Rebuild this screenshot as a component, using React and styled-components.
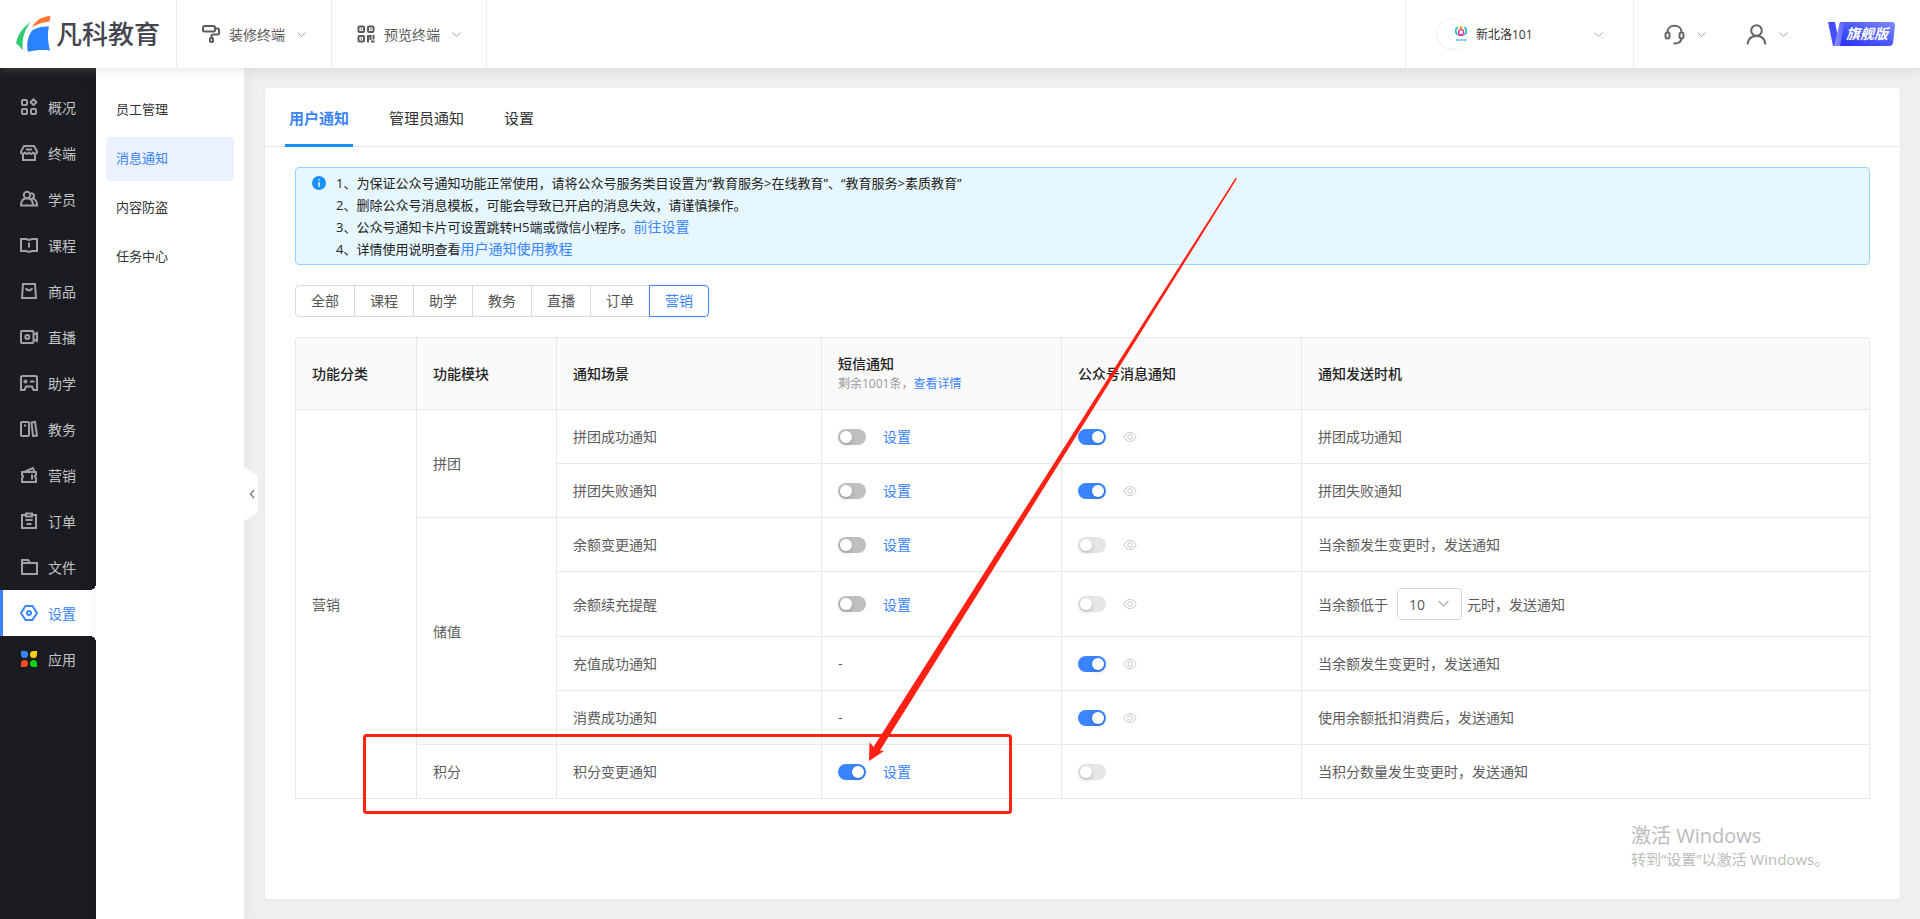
import React, { useState } from 'react';
import styled, { createGlobalStyle, css } from 'styled-components';

const BLUE = '#3a84ff';
const DARK = '#1b1c21';
const LINE = '#e8e8e8';

const GlobalStyle = createGlobalStyle`
  * {
    box-sizing: border-box;
  }

  body {
    margin: 0;
    background: #efeff2;
    color: #333;
    font-family: 'Open Sans', 'Noto Sans CJK SC', sans-serif;
    font-size: 14px;
    line-height: 21px;
  }

  button, input, select {
    font: inherit;
    color: inherit;
    margin: 0;
  }

  a {
    color: ${BLUE};
    text-decoration: none;
  }
`;

const Page = styled.div`
  position: relative;
  display: flex;
  flex-direction: column;
  min-height: 100vh;
`;

/* ---------- header ---------- */

const Header = styled.header`
  position: relative;
  z-index: 2;
  display: flex;
  height: 68px;
  background: #fff;
  box-shadow: 0 2px 10px rgba(160, 160, 160, 0.25);
`;

const Logo = styled.a`
  display: flex;
  align-items: center;
  gap: 5px;
  width: 177px;
  padding-left: 15px;
  border-right: 1px solid #eee;
  color: #45464d;
  font-size: 26px;
  font-weight: 500;
  line-height: 36px;
`;

const HeaderMenu = styled.button`
  display: flex;
  align-items: center;
  gap: 9px;
  width: 155px;
  padding: 0 0 0 25px;
  border: 0;
  border-right: 1px solid #eee;
  background: none;
  color: #5c5c5c;
  cursor: pointer;

  svg:last-child {
    margin-left: 3px;
  }
`;

const Spacer = styled.div`
  flex: 1;
`;

const Account = styled.button`
  display: flex;
  align-items: center;
  gap: 8px;
  width: 229px;
  padding: 0 30px;
  border: 0;
  border-left: 1px solid #eee;
  border-right: 1px solid #eee;
  background: none;
  color: #333;
  font-size: 12px;
  cursor: pointer;

  svg:last-child {
    margin-left: auto;
  }
`;

const Avatar = styled.span`
  display: flex;
  align-items: center;
  justify-content: center;
  width: 32px;
  height: 32px;
  border: 1px solid #eee;
  border-radius: 50%;
`;

const HeaderTools = styled.div`
  display: flex;
  align-items: center;
  gap: 40px;
  padding: 0 25px 0 30px;
`;

const ToolButton = styled.button`
  display: flex;
  align-items: center;
  gap: 12px;
  padding: 0;
  border: 0;
  background: none;
  color: #666;
  cursor: pointer;
`;

const Edition = styled.div`
  position: relative;
  width: 67px;
  height: 24px;
  color: #fff;
  font-size: 14px;
  font-style: italic;
  font-weight: 700;
  line-height: 24px;

  svg {
    display: block;
  }

  span {
    position: absolute;
    top: 0;
    left: 18px;
    white-space: nowrap;
  }
`;

/* ---------- side menus ---------- */

const Body = styled.div`
  display: flex;
  flex: 1;
`;

const SideNav = styled.nav`
  flex: none;
  width: 96px;
  padding-top: 16px;
  background: ${DARK};
`;

const SideItem = styled.a`
  position: relative;
  display: flex;
  align-items: center;
  gap: 10px;
  height: 46px;
  padding-left: 17px;
  border-left: 3px solid transparent;
  color: #c3c3c5;

  svg {
    color: #a2a2a4;
  }

  ${({ $active }) => $active && css`
    border-left-color: ${BLUE};
    background: #fff;
    color: ${BLUE};

    svg {
      color: ${BLUE};
    }

    &::before,
    &::after {
      content: '';
      position: absolute;
      right: 0;
      width: 6px;
      height: 6px;
    }

    &::before {
      top: -6px;
      background: radial-gradient(circle at 0 0, transparent 6px, #fff 6px);
    }

    &::after {
      bottom: -6px;
      background: radial-gradient(circle at 0 100%, transparent 6px, #fff 6px);
    }
  `}
`;

const SubNav = styled.nav`
  position: relative;
  display: flex;
  flex: none;
  flex-direction: column;
  gap: 5px;
  width: 148px;
  padding: 20px 10px;
  background: #fff;
  box-shadow: 2px 0 14px rgba(0, 0, 0, 0.06);
`;

const SubItem = styled.a`
  height: 44px;
  padding-left: 10px;
  border-radius: 4px;
  background: ${({ $active }) => ($active ? '#ebf1ff' : 'transparent')};
  color: ${({ $active }) => ($active ? BLUE : '#333')};
  font-size: 13px;
  line-height: 43px;
`;

const Collapse = styled.button`
  position: absolute;
  top: 399px;
  right: -14px;
  padding: 0;
  border: 0;
  background: none;
  cursor: pointer;

  svg {
    display: block;
  }
`;

/* ---------- content ---------- */

const Main = styled.main`
  display: flex;
  flex: 1;
  min-width: 0;
  padding: 20px 20px 20px 21px;
`;

const Card = styled.section`
  flex: 1;
  min-width: 0;
  border-radius: 4px;
  background: #fff;
  box-shadow: 0 1px 4px rgba(0, 0, 0, 0.04);
`;

const Tabs = styled.div`
  display: flex;
  gap: 32px;
  padding: 0 20px;
  border-bottom: 1px solid ${LINE};
`;

const Tab = styled.button`
  height: 59px;
  margin-bottom: -1px;
  padding: 5px 4px 0;
  border: 0;
  border-bottom: 3px solid ${({ $active }) => ($active ? '#1890ff' : 'transparent')};
  background: none;
  color: ${({ $active }) => ($active ? BLUE : '#333')};
  font-size: 15px;
  font-weight: ${({ $active }) => ($active ? 700 : 400)};
  cursor: pointer;
`;

const Content = styled.div`
  display: flex;
  flex-direction: column;
  align-items: stretch;
  gap: 20px;
  padding: 20px 30px;
`;

const Notice = styled.div`
  display: flex;
  gap: 10px;
  padding: 4px 16px;
  border: 1px solid #91d5ff;
  border-radius: 4px;
  background: #e6f7ff;
  color: #222;
  font-size: 13px;
  line-height: 22px;

  svg {
    flex: none;
    margin-top: 4px;
  }

  p {
    height: 22px;
    margin: 0;
  }

  a {
    font-size: 14px;
  }
`;

const Filters = styled.div`
  display: flex;
`;

const Filter = styled.button`
  width: 60px;
  height: 32px;
  margin-right: -1px;
  padding: 0 0 2px;
  border: 1px solid ${({ $active }) => ($active ? BLUE : '#d9d9d9')};
  background: #fff;
  color: ${({ $active }) => ($active ? BLUE : '#555')};
  cursor: pointer;

  ${({ $active }) => $active && css`
    position: relative;
  `}

  &:first-child {
    border-radius: 4px 0 0 4px;
  }

  &:last-child {
    border-radius: 0 4px 4px 0;
  }
`;

const Table = styled.table`
  width: 100%;
  border: 1px solid ${LINE};
  border-width: 1px 0 0 1px;
  border-radius: 4px 4px 0 0;
  border-spacing: 0;
  table-layout: fixed;
  color: #5c5c5c;

  th,
  td {
    padding: 16px;
    border: 1px solid ${LINE};
    border-width: 0 1px 1px 0;
    text-align: left;
    font-weight: 400;
  }

  th {
    height: 72px;
    background: #fafafa;
    color: #222;
    font-weight: 500;
  }

  thead th {
    padding: 0 16px;
  }

  th:last-child {
    border-top-right-radius: 4px;
  }
`;

const Col = styled.col`
  width: ${({ $width }) => ($width ? `${$width}px` : 'auto')};
`;

const Quota = styled.div`
  color: #999;
  font-size: 12px;
  font-weight: 400;
  line-height: 20px;
`;

const Controls = styled.div`
  display: flex;
  align-items: center;
  gap: 17px;
  height: 21px;
`;

const Switch = styled.input`
  flex: none;
  appearance: none;
  width: 28px;
  height: 16px;
  border-radius: 8px;
  background: #bfbfbf;
  cursor: pointer;

  &::before {
    content: '';
    display: block;
    width: 12px;
    height: 12px;
    margin: 2px;
    border-radius: 50%;
    background: #fff;
    box-shadow: 0 2px 4px rgba(0, 35, 11, 0.2);
  }

  &:checked {
    background: ${BLUE};
  }

  &:checked::before {
    margin-left: 14px;
  }

  &:disabled {
    background: #e5e5e5;
    cursor: not-allowed;
  }
`;

const IconButton = styled.button`
  display: flex;
  padding: 0;
  border: 0;
  background: none;
  color: #c8c8c8;
  cursor: pointer;
`;

const Threshold = styled.label`
  display: flex;
  align-items: center;
`;

const SelectBox = styled.span`
  position: relative;
  margin: 0 5px 0 9px;

  select {
    display: block;
    appearance: none;
    width: 65px;
    height: 32px;
    padding: 0 11px;
    border: 1px solid #d9d9d9;
    border-radius: 4px;
    background: #fff;
  }

  svg {
    position: absolute;
    top: 10px;
    right: 13px;
    pointer-events: none;
  }
`;

/* ---------- overlays ---------- */

const Marks = styled.svg`
  position: absolute;
  top: 0;
  left: 0;
  z-index: 3;
  pointer-events: none;
`;

const Watermark = styled.div`
  position: absolute;
  right: 92px;
  bottom: 49px;
  z-index: 3;
  width: 197px;
  color: #bbb;
  font-size: 15px;
  line-height: 21px;
  white-space: nowrap;
  pointer-events: none;

  strong {
    display: block;
    font-size: 20px;
    font-weight: 400;
    line-height: 26px;
  }
`;

/* ---------- icons ---------- */

const Chevron = ({ size = 9, color = '#aaa' }) => (
  <svg width={size} height={size} viewBox="0 0 9 9" fill="none" stroke={color}>
    <path d="M.5 2.5l4 4 4-4" />
  </svg>
);

const iconPaths = {
  home: (
    <>
      <rect x="2" y="2" width="5" height="5" rx="1" />
      <path d="M13.5 1.3l2.900 2.900-2.900 2.900-2.900-2.900z" strokeLinejoin="round" />
      <rect x="2" y="11" width="5" height="5" rx="1" />
      <rect x="11" y="11" width="5" height="5" rx="1" />
    </>
  ),
  shop: (
    <>
      <path d="M4 2h10l3 5.5c0 3-3.500 3-4 .5-.5 2.500-3.500 2.500-4 0-.5 2.500-3.500 2.500-4 0-.5 2.500-4 2.500-4-.5z" />
      <path d="M3 10v6h12v-6M6 5.500h6" />
    </>
  ),
  users: (
    <>
      <circle cx="7" cy="5" r="3.200" />
      <path d="M1 15.500c0-4.500 2-7.300 6-7.300s6 2.800 6 7.300zM11 3.200c3 0 4.200 3.600 1.600 5.200 3 .8 4.400 3.400 4.400 7.100h-4" />
    </>
  ),
  course: (
    <path d="M1 3h5l3 1 3-1h5v12h-5l-3 1-3-1H1zM9 6.500v5" />
  ),
  goods: (
    <path d="M3 2h12l1 14H2zM6 6c.5 3 5.500 3 6 0" />
  ),
  live: (
    <>
      <rect x="1" y="3" width="12.500" height="12" rx="1" />
      <circle cx="7.300" cy="9" r="2" />
      <path d="M13.500 6.500L17 5v8l-3.500-1.500" />
    </>
  ),
  learn: (
    <>
      <path d="M2.500 2h13A1.500 1.500 0 0 1 17 3.500V16h-3.500l-1.500-3.500H6L4.500 16H1V3.500A1.500 1.500 0 0 1 2.500 2z" />
      <path d="M3.500 7.500h4M5.500 5.500v4M10 7.500h4.500" />
    </>
  ),
  books: (
    <>
      <rect x="1" y="2" width="8" height="14" rx="1" />
      <path d="M11.500 2.500l3.500-.5 2 13.500-4 .5zM4 5.500h2" />
    </>
  ),
  ticket: (
    <path d="M2 6h14v3c-1.500 1-1.500 2 0 3v4H2v-4c1.500-1 1.500-2 0-3zM4 6l9-4 1.500 4M12 8.500v5" />
  ),
  order: (
    <>
      <path d="M5 3H2v13h14V3h-3" />
      <path d="M6 1.500h6v3H6zM5.500 8h7M6.500 12h5" />
    </>
  ),
  folder: (
    <path d="M2 5V2h6l1.500 2.500M2 5h15v11H2z" />
  ),
  settings: (
    <>
      <path d="M5.500 2h7L17 9l-4.500 7h-7L1 9z" strokeLinejoin="round" />
      <circle cx="9" cy="9" r="2" />
    </>
  ),
};

const SideIcon = ({ name }) => {
  if (name === 'apps') {
    return (
      <svg width="18" height="18" viewBox="0 0 18 18">
        <path d="M1 1h4.500A3 3 0 0 1 8 4.500 3.500 3.500 0 0 1 1 4.500z" fill="#3a84ff" />
        <path d="M17 1v3.500a3.500 3.500 0 0 1-7 0A3.500 3.500 0 0 1 13.500 1z" fill="#ffd012" />
        <path d="M1 17v-3.500a3.500 3.500 0 0 1 7 0A3.500 3.500 0 0 1 4.500 17z" fill="#ff4c22" />
        <path d="M17 17v-3.500a3.500 3.500 0 0 0-7 0 3.500 3.500 0 0 0 3.500 3.500z" fill="#10d310" />
      </svg>
    );
  }
  return (
    <svg width="18" height="18" viewBox="0 0 18 18" fill="none" stroke="currentColor" strokeWidth="2">
      {iconPaths[name]}
    </svg>
  );
};

const Eye = () => (
  <svg width="14" height="14" viewBox="0 0 14 14" fill="none" stroke="currentColor">
    <path d="M.8 7C3.500 1 10.500 1 13.200 7 10.500 13 3.500 13 .8 7z" />
    <circle cx="7" cy="7" r="2.300" />
  </svg>
);

/* ---------- data ---------- */

const sideItems = [
  ['home', '概况'],
  ['shop', '终端'],
  ['users', '学员'],
  ['course', '课程'],
  ['goods', '商品'],
  ['live', '直播'],
  ['learn', '助学'],
  ['books', '教务'],
  ['ticket', '营销'],
  ['order', '订单'],
  ['folder', '文件'],
  ['settings', '设置'],
  ['apps', '应用'],
];

const subItems = ['员工管理', '消息通知', '内容防盗', '任务中心'];
const tabs = ['用户通知', '管理员通知', '设置'];
const filters = ['全部', '课程', '助学', '教务', '直播', '订单', '营销'];

const rows = [
  { module: '拼团', span: 2, scene: '拼团成功通知', sms: false, wx: true, eye: true, time: '拼团成功通知' },
  { scene: '拼团失败通知', sms: false, wx: true, eye: true, time: '拼团失败通知' },
  { module: '储值', span: 4, scene: '余额变更通知', sms: false, eye: true, time: '当余额发生变更时，发送通知' },
  { scene: '余额续充提醒', sms: false, eye: true, threshold: true },
  { scene: '充值成功通知', wx: true, eye: true, time: '当余额发生变更时，发送通知' },
  { scene: '消费成功通知', wx: true, eye: true, time: '使用余额抵扣消费后，发送通知' },
  { module: '积分', span: 1, scene: '积分变更通知', sms: true, time: '当积分数量发生变更时，发送通知' },
];

const NoticeRow = ({ row, first }) => (
  <tr>
    {first && <td rowSpan={rows.length}>营销</td>}
    {row.module && <td rowSpan={row.span}>{row.module}</td>}
    <td>{row.scene}</td>
    <td>
      {row.sms === undefined ? '-' : (
        <Controls>
          <Switch type="checkbox" role="switch" defaultChecked={row.sms} aria-label={`${row.scene}短信`} />
          <a href="#sms">设置</a>
        </Controls>
      )}
    </td>
    <td>
      <Controls>
        <Switch type="checkbox" role="switch" defaultChecked={row.wx} disabled={!row.wx} aria-label={`${row.scene}公众号`} />
        {row.eye && <IconButton type="button" aria-label="预览"><Eye /></IconButton>}
      </Controls>
    </td>
    <td>
      {row.threshold ? (
        <Threshold>
          当余额低于
          <SelectBox>
            <select defaultValue="10">
              <option>10</option>
              <option>50</option>
              <option>100</option>
            </select>
            <Chevron size={11} />
          </SelectBox>
          元时，发送通知
        </Threshold>
      ) : row.time}
    </td>
  </tr>
);

export default function App() {
  const [tab, setTab] = useState('用户通知');
  const [filter, setFilter] = useState('营销');

  return (
    <Page>
      <GlobalStyle />
      <Header>
        <Logo href="#home">
          <svg width="36" height="38" viewBox="0 0 36 38">
            <path d="M17 12C21 5 27 1.500 35.500 1L34.500 6.500C28 7 23 9 17 12z" fill="#ff7733" />
            <path d="M16 7C8 12 3 19 1 28L8 35C6.500 25 9 15 16 7z" fill="#2ecc71" />
            <path d="M13 37C11 29 13 21 17 15.500 22 12.500 28 11 34 11.500 32 20 33 27 35 35.500 28 34.500 20 35 13 37z" fill="#2a82ff" />
          </svg>
          凡科教育
        </Logo>
        <HeaderMenu type="button">
          <svg width="18" height="18" viewBox="0 0 18 18" fill="none" stroke="currentColor" strokeWidth="2">
            <rect x="1" y="1" width="12" height="5.500" rx="1.500" />
            <path d="M13 3.500h2.500a1.500 1.500 0 0 1 1.500 1.500v3a1.500 1.500 0 0 1-1.500 1.500H11A1.500 1.500 0 0 0 9.500 11v2" />
            <rect x="8" y="13" width="3" height="4" rx="1" />
          </svg>
          装修终端
          <Chevron />
        </HeaderMenu>
        <HeaderMenu type="button">
          <svg width="18" height="18" viewBox="0 0 18 18" fill="none" stroke="currentColor" strokeWidth="2">
            <rect x="1.500" y="1.500" width="5.500" height="5.500" rx="1" />
            <rect x="11" y="1.500" width="5.500" height="5.500" rx="1" />
            <rect x="1.500" y="11" width="5.500" height="5.500" rx="1" />
            <path d="M11 17.500V11h2.500v4M16.500 10v4.500M14 16.500h3.500M3.800 4.300h1M13.300 4.300h1M3.800 13.800h1" />
          </svg>
          预览终端
          <Chevron />
        </HeaderMenu>
        <Spacer />
        <Account type="button">
          <Avatar>
            <svg width="12" height="18" viewBox="0 0 14 20" fill="none">
              <path d="M3 2C-.5 5 .5 9 3 11M11 2c3.500 3 2.500 7 0 9" stroke="#1fbcc0" strokeWidth="2" />
              <circle cx="7" cy="2.500" r="1.800" fill="#ffae19" />
              <circle cx="7" cy="8" r="3" stroke="#d62f8f" strokeWidth="1.500" />
              <path d="M4 11.500h6" stroke="#d62f8f" strokeWidth="1.500" />
              <path d="M1 17h12" stroke="#7cc3f3" strokeWidth="2.500" strokeDasharray="3.500 .8" />
            </svg>
          </Avatar>
          新北洛101
          <Chevron />
        </Account>
        <HeaderTools>
          <ToolButton type="button" aria-label="客服">
            <svg width="21" height="21" viewBox="0 0 21 21" fill="none" stroke="currentColor" strokeWidth="2">
              <path d="M3.500 8C3.500-.5 17.500-.5 17.500 8M17.500 14c0 3.500-2 5.500-8 5.500" />
              <rect x="1.500" y="8.500" width="4" height="6" rx="2" />
              <rect x="15.500" y="8.500" width="4" height="6" rx="2" />
            </svg>
            <Chevron />
          </ToolButton>
          <ToolButton type="button" aria-label="我的">
            <svg width="21" height="21" viewBox="0 0 21 21" fill="none" stroke="currentColor" strokeWidth="2">
              <circle cx="10.500" cy="6.500" r="5.300" />
              <path d="M1.500 20.500C2 15 5 12 10.500 12s8.500 3 9 8.500" />
            </svg>
            <Chevron />
          </ToolButton>
          <Edition>
            <svg width="67" height="24" viewBox="0 0 67 24">
              <defs>
                <linearGradient id="edition" x1="0" y1="1" x2="1" y2="0">
                  <stop offset="0" stopColor="#2b2dfb" />
                  <stop offset="0.500" stopColor="#4a57fa" />
                  <stop offset="1" stopColor="#7f8bff" />
                </linearGradient>
                <linearGradient id="fold" x1="0" y1="0" x2="1" y2="0">
                  <stop offset="0" stopColor="#8d94ff" />
                  <stop offset="1" stopColor="#5661fa" />
                </linearGradient>
              </defs>
              <path d="M13 0h51q3 0 3 3l-2 18q-.5 3-4 3H8z" fill="url(#edition)" />
              <path d="M0 0h7l2.500 13L12 0h5l-5 24H5z" fill="#474cf9" />
              <path d="M12 0h5l-5 24H6z" fill="url(#fold)" />
            </svg>
            <span>旗舰版</span>
          </Edition>
        </HeaderTools>
      </Header>

      <Body>
        <SideNav>
          {sideItems.map(([icon, label]) => (
            <SideItem key={icon} href={`#${icon}`} $active={icon === 'settings'}>
              <SideIcon name={icon} />
              {label}
            </SideItem>
          ))}
        </SideNav>
        <SubNav>
          {subItems.map((label) => (
            <SubItem key={label} href="#sub" $active={label === '消息通知'}>{label}</SubItem>
          ))}
          <Collapse type="button" aria-label="收起">
            <svg width="14" height="54" viewBox="0 0 14 54" fill="none">
              <path d="M0 0l10 6q4 2.500 4 6v30q0 3.500-4 6L0 54z" fill="#fff" />
              <path d="M10 23l-3.500 4 3.500 4" stroke="#777" strokeWidth="1.300" />
            </svg>
          </Collapse>
        </SubNav>

        <Main>
          <Card>
            <Tabs>
              {tabs.map((label) => (
                <Tab key={label} type="button" $active={label === tab} onClick={() => setTab(label)}>{label}</Tab>
              ))}
            </Tabs>
            <Content>
              <Notice>
                <svg width="14" height="14" viewBox="0 0 14 14">
                  <circle cx="7" cy="7" r="7" fill="#1890ff" />
                  <path d="M7 3v1.500M7 6v5" stroke="#fff" strokeWidth="1.300" />
                </svg>
                <div>
                  <p>1、为保证公众号通知功能正常使用，请将公众号服务类目设置为“教育服务&gt;在线教育”、“教育服务&gt;素质教育”</p>
                  <p>2、删除公众号消息模板，可能会导致已开启的消息失效，请谨慎操作。</p>
                  <p>3、公众号通知卡片可设置跳转H5端或微信小程序。<a href="#jump">前往设置</a></p>
                  <p>4、详情使用说明查看<a href="#guide">用户通知使用教程</a></p>
                </div>
              </Notice>

              <Filters>
                {filters.map((label) => (
                  <Filter key={label} type="button" $active={label === filter} onClick={() => setFilter(label)}>{label}</Filter>
                ))}
              </Filters>

              <Table>
                <colgroup>
                  <Col $width={121} />
                  <Col $width={140} />
                  <Col $width={265} />
                  <Col $width={240} />
                  <Col $width={240} />
                  <Col />
                </colgroup>
                <thead>
                  <tr>
                    <th>功能分类</th>
                    <th>功能模块</th>
                    <th>通知场景</th>
                    <th>
                      短信通知
                      <Quota>剩余1001条，<a href="#quota">查看详情</a></Quota>
                    </th>
                    <th>公众号消息通知</th>
                    <th>通知发送时机</th>
                  </tr>
                </thead>
                <tbody>
                  {rows.map((row, i) => (
                    <NoticeRow key={row.scene} row={row} first={i === 0} />
                  ))}
                </tbody>
              </Table>
            </Content>
          </Card>
        </Main>
      </Body>

      <Marks width="1240" height="820" viewBox="0 0 1240 820">
        <rect x="364.500" y="735.500" width="646" height="77" rx="2" fill="none" stroke="#ff2113" strokeWidth="3" />
        <path d="M1235.500 178L873.500 747 869.500 742 869 761 884 751 880 750.500 1237 178.500z" fill="#ff2113" />
      </Marks>
      <Watermark>
        <strong>激活 Windows</strong>
        转到“设置”以激活 Windows。
      </Watermark>
    </Page>
  );
}
